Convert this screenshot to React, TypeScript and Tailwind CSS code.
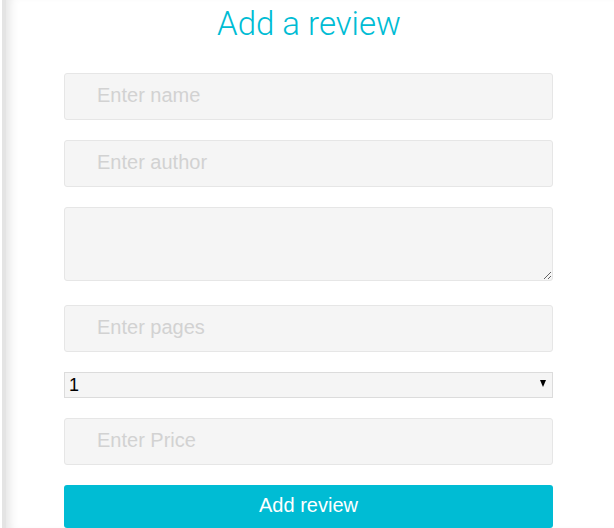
export default function App() {
  const inputCls =
    "block w-full h-[47px] bg-[#f5f5f5] border border-[#e6e6e6] rounded-[3px] pl-[32px] pb-[2px] text-[20px] text-black outline-none placeholder:text-[#d2d2d2]";
  return (
    <div className="flex w-[614px] h-[528px] bg-white overflow-hidden" style={{ fontFamily: '"Liberation Sans", Arial, sans-serif' }}>
      <div className="w-[2px] shrink-0 bg-white" />
      <div className="w-[4px] shrink-0 bg-[#e4e4e4]" />
      <div className="flex-1 shadow-[inset_10px_0_10px_-6px_rgba(0,0,0,0.10)]">
        <h1
          className="text-center text-[33px] leading-[38px] pt-[5px] font-light text-[#00bcd4] pr-[2px]"
          style={{ fontFamily: 'Roboto, "Liberation Sans", sans-serif' }}
        >
          Add a review
        </h1>
        <form className="ml-[58px] w-[489px] mt-[30px] flex flex-col">
          <input className={inputCls} placeholder="Enter name" />
          <input className={inputCls + " mt-[20px]"} placeholder="Enter author" />
          <textarea className="block w-full h-[74px] mt-[20px] bg-[#f5f5f5] border border-[#e6e6e6] rounded-[3px] outline-none resize-y" />
          <input className={inputCls + " mt-[24px]"} placeholder="Enter pages" />
          <div className="relative mt-[20px]">
            <select className="block w-full h-[26px] appearance-none bg-[#f5f5f5] border border-[#dcdcdc] text-[18px] leading-[24px] text-black pl-[4px] outline-none">
              <option>1</option>
              <option>2</option>
              <option>3</option>
              <option>4</option>
              <option>5</option>
            </select>
            <span className="pointer-events-none absolute right-[7px] top-[8px] w-0 h-0 border-l-[3.5px] border-r-[3.5px] border-t-[7px] border-l-transparent border-r-transparent border-t-black" />
          </div>
          <input className={inputCls + " mt-[20px]"} placeholder="Enter Price" />
          <button
            type="button"
            className="block w-full h-[43px] mt-[20px] bg-[#00bcd4] text-white text-[20px] rounded-[3px] pb-[4px]"
          >
            Add review
          </button>
        </form>
      </div>
    </div>
  );
}
